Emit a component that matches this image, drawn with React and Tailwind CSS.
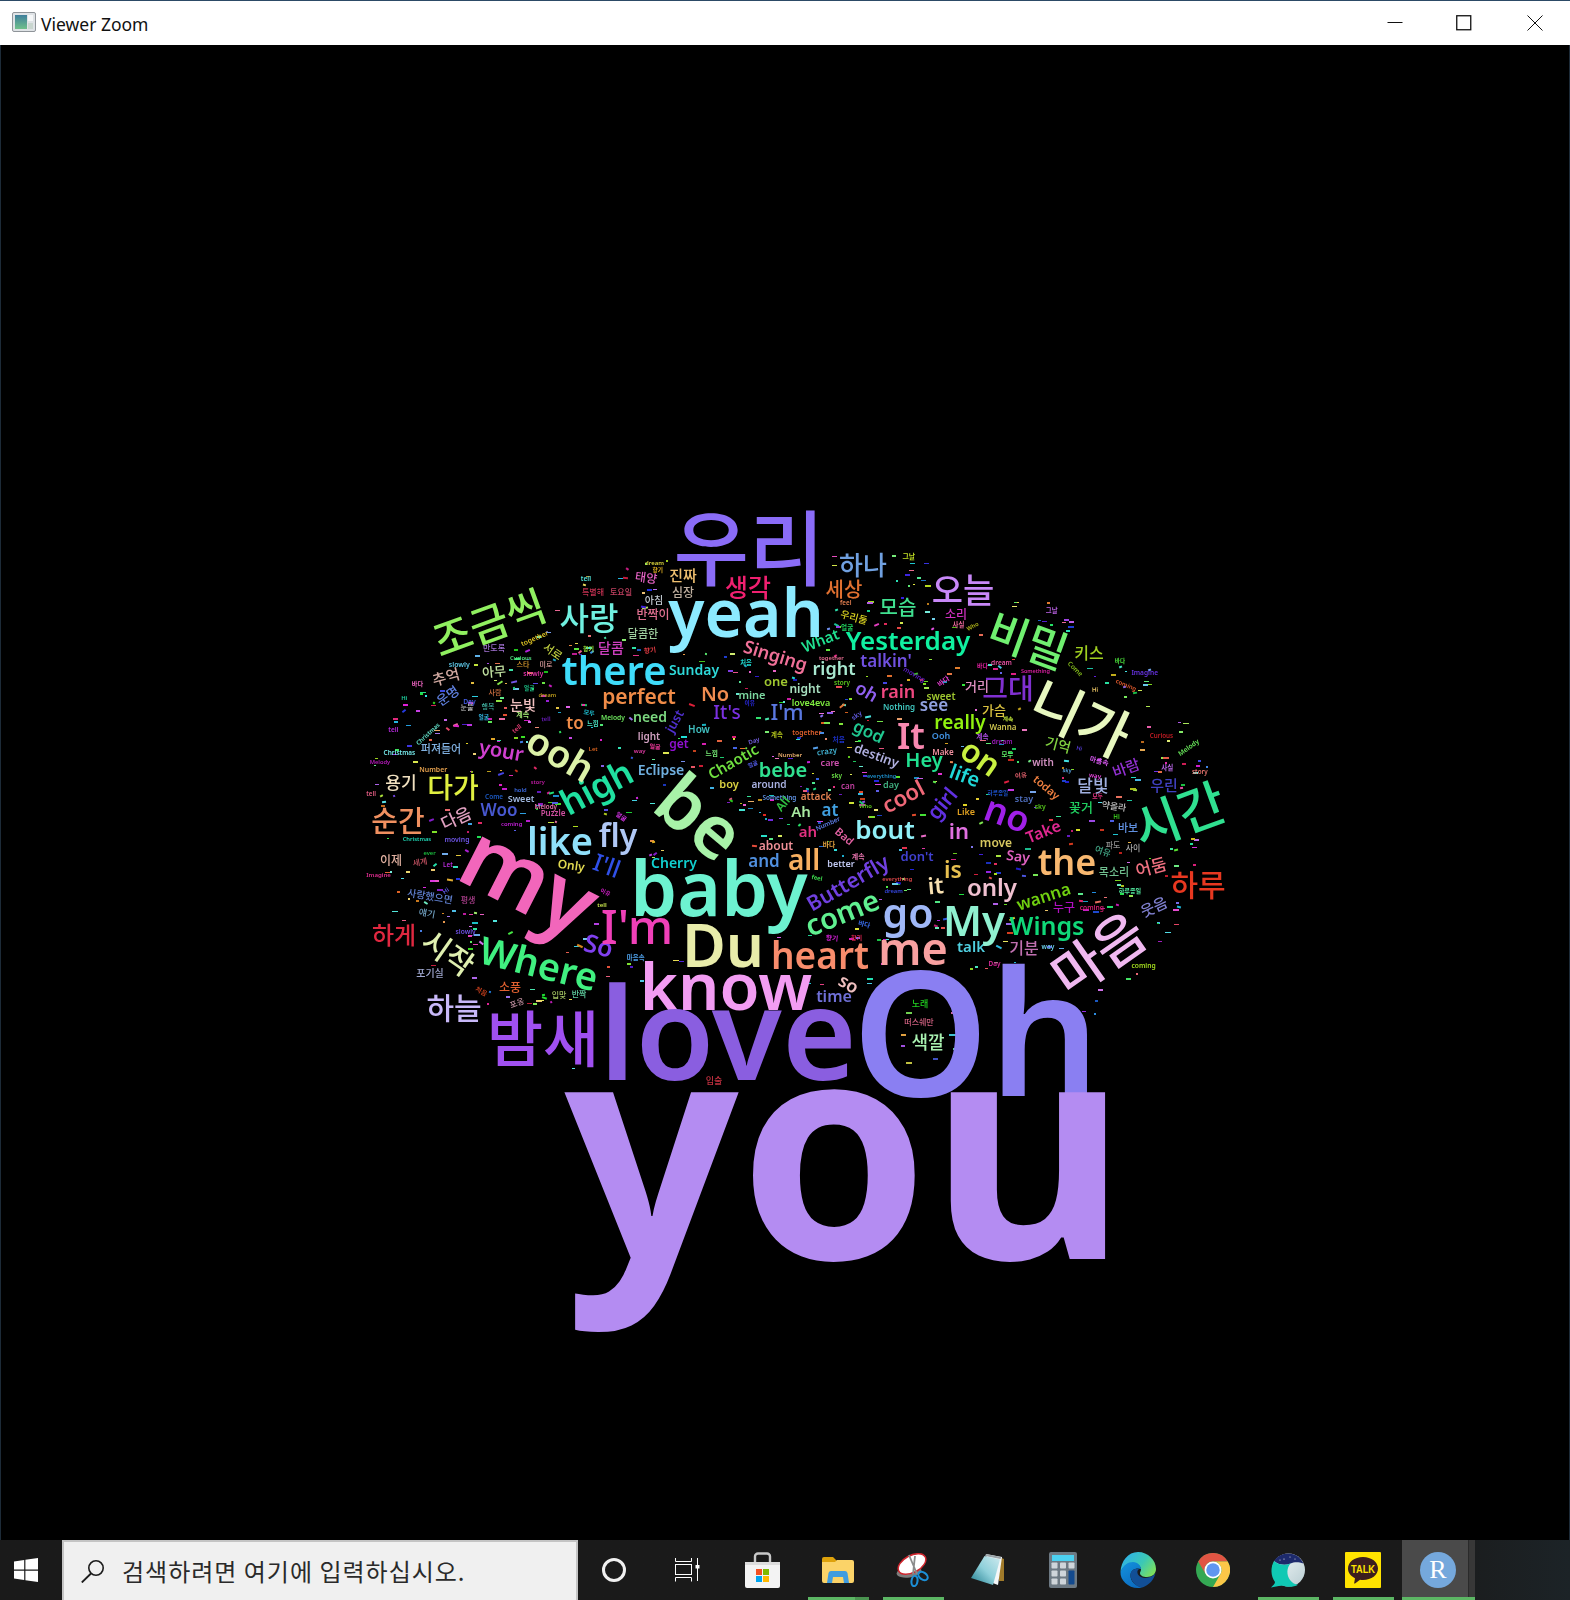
import React from "react";

// Word cloud data: [text, x, y, size, colour, rotation, weight]
// B = y is the text baseline, C = y is the visual middle of the lower-case letters / hangul
const B = [
  ["you", 845, 1259, 305, "#b48cf2", 0, 700],
  ["Oh", 975, 1097, 174, "#8a7ff2"],
  ["love", 727, 1080, 128, "#8a5ee0"],
  ["know", 725, 1010, 65, "#f29cf2"],
  ["baby", 718, 916, 75, "#6df2d0"],
  ["Du", 722, 967, 60, "#e8ecaa"],
  ["yeah", 745, 637, 66, "#8ceaff"],
  ["there", 613, 686, 40, "#3fdcfa"],
  ["Sunday", 693, 676, 14, "#2ed8d8"],
  ["perfect", 638, 705, 21, "#f08c48"],
  ["No", 714, 701, 20, "#f08c50"],
  ["It's", 726, 720, 19, "#7a30e0", 0, 500],
  ["I'm", 786, 720, 22, "#5a78e0", 0, 500],
  ["one", 775, 686, 13, "#a0c830"],
  ["mine", 751, 699, 11, "#7cd8a0"],
  ["need", 649, 723, 14, "#7cd880"],
  ["to", 574, 730, 17, "#f08c48"],
  ["like", 559, 855, 38, "#90e0fa"],
  ["fly", 617, 848, 32, "#b0c8f5"],
  ["I'm", 636, 945, 48, "#f040b8", 0, 500],
  ["heart", 819, 969, 37, "#f88c6c"],
  ["me", 912, 965, 45, "#f8a0a0"],
  ["go", 907, 928, 41, "#a0b8f8"],
  ["My", 973, 936, 42, "#90f0d0"],
  ["Wings", 1046, 935, 25, "#10d878"],
  ["only", 991, 896, 24, "#f0c0d0"],
  ["the", 1066, 876, 36, "#f8b870"],
  ["all", 803, 870, 28, "#f8b060"],
  ["bout", 884, 839, 26, "#90f0f8"],
  ["It", 910, 750, 36, "#f888b0"],
  ["really", 959, 730, 19, "#90f010"],
  ["Yesterday", 907, 650, 26, "#10f0a0"],
];

const C = [
  ["my", 525, 888, 92, "#f266bb", 27],
  ["be", 695, 822, 73, "#a8f2a8", 40],
  ["ooh", 558, 757, 38, "#dcf2a8", 30],
  ["your", 500, 753, 20, "#d040d0", 10],
  ["high", 597, 790, 35, "#20e0a0", -28],
  ["Eclipse", 660, 772, 14, "#70b0e0"],
  ["Chaotic", 733, 763, 15, "#70e040", -30],
  ["bebe", 782, 772, 20, "#30e090"],
  ["boy", 728, 785, 11, "#d8d040"],
  ["around", 768, 785, 10, "#a8b0e0"],
  ["Woo", 498, 812, 17, "#4858d0"],
  ["Sweet", 520, 800, 9, "#a0b8e0"],
  ["Puzzle", 552, 814, 8, "#d050a0"],
  ["Singing", 774, 657, 18, "#f07098", 17],
  ["just", 675, 722, 13, "#5030d0", -60],
  ["light", 648, 737, 10, "#d0a0c0"],
  ["How", 698, 730, 10, "#40c0c0"],
  ["get", 678, 745, 12, "#9010d0"],
  ["All", 783, 805, 12, "#30c040", -50],
  ["Ah", 800, 813, 15, "#a8e8a0"],
  ["I'll", 605, 868, 24, "#3050e8", 20, 500],
  ["Only", 570, 867, 12, "#e0d850", 8],
  ["Cherry", 673, 865, 14, "#10d0d0"],
  ["and", 763, 863, 17, "#5090e0"],
  ["about", 775, 847, 12, "#f09098"],
  ["Where", 537, 967, 38, "#40f080", 14],
  ["So", 597, 948, 25, "#8040f0", 15],
  ["come", 842, 915, 29, "#60f090", -22],
  ["Butterfly", 848, 885, 21, "#7040e0", -30],
  ["it", 935, 888, 23, "#f8e0b0", -5],
  ["is", 952, 872, 23, "#e8c050"],
  ["wanna", 1043, 898, 17, "#70d010", -18],
  ["Say", 1017, 858, 14, "#e060c0", 8],
  ["better", 840, 865, 9, "#c0c8f0"],
  ["don't", 916, 858, 13, "#4040d0"],
  ["Take", 1043, 833, 16, "#e02890", -22],
  ["move", 995, 844, 12, "#d8c860"],
  ["in", 958, 833, 22, "#e070e0"],
  ["ah", 807, 833, 15, "#e03080"],
  ["no", 1005, 818, 36, "#a020e8", 20],
  ["girl", 943, 805, 21, "#6030e0", -50],
  ["cool", 903, 798, 22, "#f06878", -28],
  ["at", 829, 812, 17, "#40a0e0"],
  ["attack", 815, 797, 10, "#e08050"],
  ["life", 963, 778, 20, "#20d8d8", 20],
  ["Hey", 923, 762, 20, "#20e090"],
  ["on", 978, 760, 32, "#c8f040", 35],
  ["destiny", 875, 757, 13, "#b0b0e0", 20],
  ["god", 867, 733, 17, "#20c890", 25],
  ["see", 933, 707, 17, "#90a0e0"],
  ["rain", 897, 693, 18, "#f04880"],
  ["sweet", 940, 697, 10, "#a0c830"],
  ["Nothing", 898, 708, 8, "#40c8c0"],
  ["oh", 865, 693, 18, "#9060f0", 30],
  ["talkin'", 885, 663, 17, "#7050e0"],
  ["right", 833, 670, 18, "#a8e8d0"],
  ["night", 804, 690, 12, "#a8e0c0"],
  ["love4eva", 810, 704, 9, "#80f040"],
  ["What", 820, 642, 15, "#20e090", -22],
  ["time", 833, 998, 16, "#7070d8"],
  ["so", 847, 985, 18, "#f0c0c0", 30],
  ["talk", 970, 948, 15, "#50d0e0"],
  ["Bad", 843, 837, 11, "#e060a0", 40],
  ["Like", 965, 813, 9, "#e0a020"],
  ["today", 1045, 788, 11, "#f08040", 40],
  ["stay", 1023, 800, 9, "#5070c0"],
  ["with", 1042, 763, 10, "#d090c0"],
  ["Ooh", 940, 737, 9, "#4090e0"],
  ["Make", 942, 753, 8, "#f090a0"],
  ["Wanna", 1002, 728, 8, "#d0c850"],
  ["day", 890, 786, 9, "#40b080"],
  ["care", 829, 764, 9, "#d050b0"],
  ["crazy", 826, 752, 8, "#40b0d0", -8],
  ["can", 847, 787, 8, "#c040a0"],
  ["우리", 748, 547, 82, "#8a6cf7"],
  ["조금씩", 488, 623, 42, "#90f060", -20],
  ["사랑", 588, 618, 32, "#70f0e0"],
  ["생각", 747, 587, 25, "#f02070"],
  ["진짜", 682, 575, 15, "#f0c070"],
  ["태양", 645, 578, 12, "#e060c0", 8],
  ["심장", 682, 593, 12, "#c0b0a0"],
  ["아침", 653, 600, 10, "#c0c8d0"],
  ["반짝이", 652, 615, 12, "#e07090"],
  ["달콤한", 642, 633, 11, "#a0d0a0"],
  ["달콤", 610, 648, 14, "#d040c0"],
  ["서로", 552, 651, 11, "#c0d040", 35],
  ["추억", 445, 677, 15, "#d0a8a0", -15],
  ["아무", 493, 672, 13, "#c0e0a0", -5],
  ["운명", 447, 696, 13, "#6080e0", -35],
  ["눈빛", 522, 705, 14, "#f0c0c0"],
  ["퍼져들어", 440, 748, 11, "#80b0e0"],
  ["용기", 400, 782, 17, "#f0e0c0"],
  ["다가", 452, 787, 28, "#e0f040"],
  ["순간", 397, 820, 29, "#f09060"],
  ["다음", 455, 818, 17, "#e0a0c0", -25],
  ["이제", 390, 861, 12, "#e0b0a0"],
  ["시작", 447, 953, 30, "#e0f0b0", 35],
  ["하게", 393, 935, 24, "#e02840"],
  ["하늘", 453, 1008, 30, "#c8b8f8"],
  ["밤새", 542, 1038, 61, "#a050f0"],
  ["포기실", 429, 973, 10, "#a0a8d0"],
  ["사랑했으면", 429, 896, 10, "#6080d0", 10],
  ["소풍", 509, 988, 12, "#e06030"],
  ["하나", 862, 565, 26, "#70a0e0"],
  ["세상", 843, 590, 20, "#e07030"],
  ["오늘", 962, 590, 34, "#c888f8"],
  ["모습", 897, 608, 20, "#40e090"],
  ["비밀", 1027, 640, 44, "#70f070", 20],
  ["소리", 955, 615, 12, "#d030c0"],
  ["우리둘", 853, 617, 10, "#d8d020", 15],
  ["키스", 1088, 653, 16, "#a0d020"],
  ["그대", 1007, 688, 28, "#8030d0"],
  ["거리", 976, 686, 13, "#e090c0"],
  ["니가", 1080, 717, 56, "#e8f8c0", 25],
  ["가슴", 993, 710, 13, "#d8c040"],
  ["기억", 1057, 745, 14, "#80d040", 15],
  ["바람", 1125, 768, 15, "#9030d0", -20],
  ["달빛", 1092, 785, 17, "#a0b0e0"],
  ["우린", 1163, 785, 15, "#4040c0"],
  ["꽃거", 1080, 807, 13, "#20d060"],
  ["시간", 1178, 815, 51, "#30e090", -20],
  ["바보", 1127, 827, 11, "#6090e0"],
  ["목소리", 1113, 871, 11, "#70c090"],
  ["어둠", 1150, 867, 17, "#f07080", -15],
  ["하루", 1197, 885, 30, "#e83820"],
  ["누구", 1063, 908, 12, "#b010c0"],
  ["웃음", 1153, 907, 15, "#8080d0", -25],
  ["마음", 1097, 953, 54, "#f0b8f0", -35],
  ["기분", 1023, 948, 16, "#c070b0"],
  ["색깔", 927, 1042, 18, "#a8f0b0"],
  ["노래", 919, 1003, 9, "#20d020"],
  ["떠스쉐만", 918, 1022, 8, "#d06080"],
  ["입술", 713, 1080, 9, "#c03040"],
  ["특별해", 592, 592, 8, "#c03050"],
  ["토요일", 620, 592, 8, "#c04060"],
  ["만도록", 493, 648, 8, "#a070d0"],
  ["스타", 522, 664, 7, "#e0a030"],
  ["미로", 545, 664, 7, "#e0a0a0"],
  ["사람", 494, 692, 7, "#d07040"],
  ["눈물", 466, 707, 7, "#c0c0c0"],
  ["행복", 487, 706, 7, "#40b0a0"],
  ["세계", 419, 862, 8, "#c05060", -10],
  ["얘기", 426, 913, 9, "#70a0c0", 10],
  ["평생", 467, 900, 8, "#b04090"],
  ["입맞", 558, 995, 8, "#a0c060"],
  ["반짝", 578, 994, 8, "#60d0a0"],
  ["포옹", 516, 1003, 8, "#c090a0", -20],
  ["파도", 1112, 845, 8, "#909090"],
  ["사이", 1132, 848, 8, "#b0b0b0"],
  ["여유", 1102, 851, 9, "#40a080", 20],
  ["약올라", 1113, 806, 9, "#c0c0c0", 8],
];

const words = [
  ...B.map(([t, x, y, s, c, r, f]) => ({ t, x, y: y + 0 - 0.268 * s, s, c, r: r || 0, f })),
  ...C.map(([t, x, y, s, c, r, f]) => ({ t, x, y, s, c, r: r || 0, f })),
].sort((a, b) => a.s - b.s);

const isKo = (t) => /[가-힣]/.test(t);
const halfWidth = (t, s) => t.length * s * (isKo(t) ? 0.49 : 0.29);

// Is the point inside the (possibly rotated) rectangle of a placed word?
const hitOne = (w, px, py) => {
  const a = (-w.r * Math.PI) / 180;
  const dx = px - w.x;
  const dy = py - w.y;
  const lx = dx * Math.cos(a) - dy * Math.sin(a);
  const ly = dx * Math.sin(a) + dy * Math.cos(a);
  return Math.abs(lx) < halfWidth(w.t, w.s) + 1.5 && Math.abs(ly) < w.s * 0.46 + 1.5;
};
const hit = (px, py) => words.some((w) => hitOne(w, px, py));

function rng(seed) {
  let a = seed;
  return () => {
    a |= 0;
    a = (a + 0x6d2b79f5) | 0;
    let t = Math.imul(a ^ (a >>> 15), 1 | a);
    t = (t + Math.imul(t ^ (t >>> 7), 61 | t)) ^ t;
    return ((t ^ (t >>> 14)) >>> 0) / 4294967296;
  };
}

const pool = ["Day", "feel", "Come", "tell", "Who", "Let", "Hi", "mix", "sky", "way", "ever", "thing", "hold", "story", "dream", "Imagine", "slowly", "Christmas", "Number", "everything", "together", "moving", "coming", "Curious", "Melody", "Something", "이유", "사실", "모두", "바다", "마음속", "하루종일", "얼굴", "계속", "향기", "느낌", "그날", "처음"];

const r = rng(7);
const inCloud = (x, y) => {
  const dx = (x - 785) / 425;
  const dy = (y - 800) / (y < 800 ? 255 : 310);
  if (dx * dx + dy * dy > 1) return false;
  if (y > 1000 && x < 470) return false;
  if (y > 985 && x > 1100) return false;
  if (x > 950 && y < 600) return false;
  if (x > 1080 && y < 660) return false;
  if (x > 1150 && y < 720) return false;
  if (x < 430 && y < 680) return false;
  if (x < 385 && y < 740) return false;
  return y < 1092;
};
const dashes = [];
const tiny = [];
for (let i = 0; i < 6000 && (dashes.length < 640 || tiny.length < 110); i++) {
  const x = 370 + r() * 840;
  const y = 540 + r() * 550;
  const hue = Math.floor(r() * 360);
  const light = 42 + Math.floor(r() * 28);
  const kind = r();
  if (!inCloud(x, y) || hit(x, y)) continue;
  const col = `hsl(${hue} 75% ${light}%)`;
  if (kind < 0.8) {
    if (dashes.length < 640) dashes.push({ x, y, w: 2 + r() * 4, h: r() < 0.7 ? 1.5 : 2, col, rot: r() < 0.2 ? -40 + r() * 80 : 0 });
  } else if (tiny.length < 110) {
    const t = pool[Math.floor(r() * pool.length)];
    const s = 5.5 + r() * 1.5;
    const hw = halfWidth(t, s);
    const rot = r() < 0.25 ? -45 + r() * 90 : 0;
    const clear =
      !hit(x - hw, y) && !hit(x + hw, y) && !tiny.some((o) => Math.abs(o.x - x) < o.hw + hw + 2 && Math.abs(o.y - y) < o.s / 2 + s / 2 + 2);
    if (clear) tiny.push({ t, x, y, s, col, rot, hw });
  }
}
// filler inside the counter of the O
[[905, 1012, 6, "#70d050"], [950, 1012, 5, "#d060a0"], [900, 1034, 5, "#e0a040"], [948, 1034, 7, "#40c0d0"], [905, 1062, 6, "#c0c040"], [932, 1058, 5, "#4050c0"], [935, 990, 6, "#e06060"], [900, 1045, 4, "#a050e0"], [952, 1048, 5, "#60d0a0"]].forEach(([x, y, w, col]) => dashes.push({ x, y, w, h: 1.5, col, rot: 0 }));

function Cloud() {
  return (
    <div className="absolute inset-0 blur-[0.7px]" style={{ top: -45 }}>
      {dashes.map((d, i) => (
        <span key={i} className="absolute block" style={{ left: d.x, top: d.y, width: d.w, height: d.h, background: d.col, transform: `rotate(${d.rot}deg)` }} />
      ))}
      {tiny.map((w, i) => (
        <span key={i} className="absolute whitespace-nowrap font-semibold leading-none font-['Noto_Sans','Noto_Sans_CJK_KR',sans-serif]" style={{ left: w.x, top: w.y, fontSize: w.s, color: w.col, transform: `translate(-50%,-50%) rotate(${w.rot}deg)` }}>
          {w.t}
        </span>
      ))}
      {words.map((w, i) => {
        const ko = isKo(w.t);
        return (
          <span key={i} className="absolute whitespace-nowrap leading-none font-['Noto_Sans','Noto_Sans_CJK_KR',sans-serif]" style={{ left: w.x, top: w.y, fontSize: w.s, color: w.c, fontWeight: w.f || (ko ? 500 : 600), transform: `translate(-50%,-50%) rotate(${w.r}deg) translateY(${ko ? "0em" : "-0.12em"})` }}>
            {w.t}
          </span>
        );
      })}
    </div>
  );
}

function TitleIcon() {
  return (
    <svg width="24" height="20" viewBox="0 0 24 20" className="block">
      <defs>
        <linearGradient id="ti" x1="0" y1="0" x2="0" y2="1">
          <stop offset="0" stopColor="#3f7f9c" />
          <stop offset="1" stopColor="#6fc08a" />
        </linearGradient>
      </defs>
      <rect x="0.5" y="0.5" width="23" height="19" rx="1.5" fill="#dfe3e6" stroke="#8f9499" />
      <rect x="3" y="3" width="12" height="14" fill="url(#ti)" />
      <rect x="16" y="3" width="5" height="6" fill="#f5f7f8" />
      <rect x="16" y="11" width="5" height="6" fill="#c9d6cf" />
    </svg>
  );
}

function TitleBar() {
  return (
    <div className="flex h-[45px] shrink-0 items-center border-t border-t-[#2c4a66] bg-white">
      <div className="ml-3 mr-[5px] mt-[-2px]">
        <TitleIcon />
      </div>
      <span className="mt-[3px] text-[17.5px] leading-none text-[#111] font-['Noto_Sans',sans-serif]">Viewer Zoom</span>
      <div className="ml-auto flex items-center pr-[27px]">
        <svg width="16" height="16" viewBox="0 0 16 16" className="mr-[53px]"><path d="M0.5 7.5H15.5" stroke="#111" strokeWidth="1" /></svg>
        <svg width="16" height="16" viewBox="0 0 16 16" className="mr-[55px]"><rect x="0.75" y="0.75" width="14" height="14" fill="none" stroke="#111" strokeWidth="1.3" /></svg>
        <svg width="16" height="16" viewBox="0 0 16 16"><path d="M0.5 0.5L15.5 15.5M15.5 0.5L0.5 15.5" stroke="#111" strokeWidth="1" /></svg>
      </div>
    </div>
  );
}

function WinLogo() {
  return (
    <svg width="24" height="24" viewBox="0 0 24 24" className="block">
      <path fill="#fff" d="M0 3.4L10.2 2V11.5H0ZM11.4 1.8L24 0V11.5H11.4ZM0 12.7H10.2V22L0 20.6ZM11.4 12.7H24V24L11.4 22.2Z" />
    </svg>
  );
}

function Store() {
  return (
    <svg width="35" height="36" viewBox="0 0 35 36" className="block">
      <path d="M10 11V4.5A3 3 0 0 1 13 1.5H22A3 3 0 0 1 25 4.5V11" fill="none" stroke="#c8c8c8" strokeWidth="2.4" />
      <path d="M0 10H35V34A2 2 0 0 1 33 36H2A2 2 0 0 1 0 34Z" fill="#f3f3f3" />
      <rect x="0" y="10" width="35" height="3" fill="#dcdcdc" />
      <rect x="11" y="17" width="6" height="6" fill="#f25022" />
      <rect x="18" y="17" width="6" height="6" fill="#7fba00" />
      <rect x="11" y="24" width="6" height="6" fill="#00a4ef" />
      <rect x="18" y="24" width="6" height="6" fill="#ffb900" />
    </svg>
  );
}

function Folder() {
  return (
    <svg width="32" height="26" viewBox="0 0 32 26" className="block">
      <path d="M0 2A2 2 0 0 1 2 0H11L15 4H28V10H0Z" fill="#dea20b" />
      <path d="M0 5H13L15 3H30A2 2 0 0 1 32 5V24A2 2 0 0 1 30 26H2A2 2 0 0 1 0 24Z" fill="#fbd368" />
      <path d="M5 26L6.5 16A3 3 0 0 1 9 14H23A3 3 0 0 1 25.5 16L27 26H22L21 20H11L10 26Z" fill="#3f9ce0" />
    </svg>
  );
}

function Snip() {
  return (
    <svg width="34" height="34" viewBox="0 0 34 34" className="block">
      <ellipse cx="13" cy="19" rx="12.5" ry="5.5" fill="#7d7d7d" transform="rotate(-8 13 19)" />
      <ellipse cx="16" cy="11" rx="15" ry="8.5" fill="#fff" stroke="#d0262e" strokeWidth="1.5" transform="rotate(-28 16 11)" />
      <path d="M13 2L21 21M19 3L17 21" stroke="#8b8b8b" strokeWidth="1.8" fill="none" />
      <ellipse cx="18.5" cy="28" rx="3" ry="5.2" fill="none" stroke="#1c8fd6" strokeWidth="2.1" transform="rotate(8 18.5 28)" />
      <ellipse cx="27" cy="23" rx="5.2" ry="3.4" fill="none" stroke="#1c8fd6" strokeWidth="2.1" transform="rotate(35 27 23)" />
    </svg>
  );
}

function Notepad() {
  return (
    <svg width="33" height="32" viewBox="0 0 33 32" className="block">
      <defs>
        <linearGradient id="np" x1="0" y1="1" x2="1" y2="0">
          <stop offset="0" stopColor="#1f7c8e" />
          <stop offset="0.5" stopColor="#8fd0da" />
          <stop offset="1" stopColor="#cfeaef" />
        </linearGradient>
      </defs>
      <path d="M28 3L33 5V27L28 27Z" fill="#a07a2a" />
      <path d="M15 0L31 3L27 31L19 28Z" fill="#f4f7f8" />
      <path d="M15 0L30 3L29.6 5L14 2Z" fill="#9aa3a8" />
      <path d="M13.5 2L29 5.5L22 31L0 24Z" fill="url(#np)" />
    </svg>
  );
}

function Calc() {
  const cols = [2.5, 11, 19.5];
  const rows = [10.5, 18.5, 26.5];
  return (
    <svg width="28" height="36" viewBox="0 0 28 36" className="block">
      <rect width="28" height="36" rx="2" fill="#6d7983" />
      <rect x="3" y="3" width="22" height="6" fill="#4cd0f0" />
      {rows.map((y) =>
        cols.map((x) =>
          x === 19.5 && y > 11 ? null : <rect key={`${x}-${y}`} x={x} y={y} width="6" height="6" rx="0.8" fill="#cfd5da" />
        )
      )}
      <rect x="19.5" y="18.5" width="6" height="14" rx="0.8" fill="#134a8e" />
    </svg>
  );
}

function Edge() {
  return (
    <svg width="36" height="36" viewBox="0 0 36 36" className="block">
      <defs>
        <linearGradient id="e1" x1="0.1" y1="0.2" x2="1" y2="0.7">
          <stop offset="0" stopColor="#2fb3e6" />
          <stop offset="0.55" stopColor="#3cc8b4" />
          <stop offset="1" stopColor="#7ce05e" />
        </linearGradient>
        <linearGradient id="e2" x1="0" y1="0" x2="0.6" y2="1">
          <stop offset="0" stopColor="#1493de" />
          <stop offset="1" stopColor="#0c6cc0" />
        </linearGradient>
      </defs>
      <path d="M18 0C28 0 36 8 36 17C36 22 32 25 27 25C23 25 20 23.5 20 21C20 20 21 19 21 17.5C21 14 17 11 13 11C7 11 3 15 0.5 20C1 9 8 0 18 0Z" fill="url(#e1)" />
      <path d="M0.5 20C3 13 8 10 13 10C18 10 21 14 21 17C17 15.5 11 17 10.5 23C10 29 16 35 23 35.3C21 35.8 19.5 36 18 36C8 36 0 28 0.5 20Z" fill="url(#e2)" />
      <path d="M10.5 23C10.5 19 14 16 19 17C17 18.5 17 20.5 18 22.5C20 25.5 24 26.5 28 25.5C31 25 34 23.5 35.5 21C34 28 29 33 23 35.3C16 35.5 10.5 29 10.5 23Z" fill="#124f96" />
    </svg>
  );
}

function Chrome() {
  return (
    <svg width="34" height="34" viewBox="0 0 48 48" className="block">
      <circle cx="24" cy="24" r="24" fill="#34a853" />
      <path d="M3.2 12A24 24 0 0 1 44.8 12H24A12 12 0 0 0 13.6 30Z" fill="#e05443" />
      <path d="M44.8 12A24 24 0 0 1 24 48L34.4 30A12 12 0 0 0 24 12Z" fill="#fbc748" />
      <circle cx="24" cy="24" r="12" fill="#fff" />
      <circle cx="24" cy="24" r="9.5" fill="#5f96f0" />
    </svg>
  );
}

function Whale() {
  return (
    <svg width="35" height="35" viewBox="0 0 35 35" className="block">
      <defs>
        <linearGradient id="wh" x1="0" y1="0" x2="1" y2="1">
          <stop offset="0" stopColor="#f6fafa" />
          <stop offset="1" stopColor="#b8cdd2" />
        </linearGradient>
      </defs>
      <circle cx="18.5" cy="17" r="16.5" fill="url(#wh)" />
      <path d="M4 8C7 3.500 12 .5 18.5 .5C25 .5 30.500 4 33.500 10.500C28 8.500 24 9 20.500 10.500C15 13 9 12 4 8Z" fill="#1d2a6c" />
      <path d="M4 8C9 12 15 13 20.500 10.500C16.500 15 16.500 22 20 27C22.500 30 25 31.500 28 31.800C24 34 19 34.500 14 33C10 32 5 34 1 34.500C3.500 32 5 31 5 29C0.500 23 0.500 14 4 8Z" fill="#10c9b4" />
      <circle cx="14" cy="6" r="0.6" fill="#fff" /><circle cx="20" cy="4" r="0.5" fill="#fff" /><circle cx="25" cy="6" r="0.5" fill="#fff" /><circle cx="10" cy="7" r="0.5" fill="#fff" />
    </svg>
  );
}

function Talk() {
  return (
    <div className="relative flex h-9 w-9 items-center justify-center rounded-[1px] bg-[#ffe300]">
      <svg width="32" height="30" viewBox="0 0 32 30" className="block">
        <path d="M16 2C24.5 2 31 7 31 13.5C31 20 24.5 25 16 25C15 25 14 25 13 24.8L8 28.5C7.5 28.8 7 28.5 7.2 28L8 23.2C3.500 21 1 17.500 1 13.5C1 7 7.500 2 16 2Z" fill="#3b1e1e" />
        <text x="16" y="17.5" textAnchor="middle" fontSize="10" fontWeight="700" fill="#ffe300" fontFamily="'Liberation Sans', sans-serif" textLength="24" lengthAdjust="spacingAndGlyphs">TALK</text>
      </svg>
    </div>
  );
}

function Cell({ w, bar, children }) {
  return (
    <div className={`relative flex h-full shrink-0 items-center justify-center ${w}`}>
      {children}
      {bar}
    </div>
  );
}

const Bar = ({ split }) => (
  <div className="absolute bottom-0 left-2 flex h-[3px] w-[61px]">
    <div className="h-full flex-1 bg-[#5cb664]" />
    {split ? <div className="h-full w-[14px] bg-[#4a9450]" /> : null}
  </div>
);

function Taskbar() {
  return (
    <div className="flex h-[60px] shrink-0 bg-linear-to-r from-[#1a1a1a] via-[#1a1a1a] via-90% to-[#1c2327]">
      <div className="flex h-full w-[62px] shrink-0 items-center justify-start pl-[14px]">
        <WinLogo />
      </div>
      <div className="flex h-full w-[516px] shrink-0 items-center border-x-2 border-t-2 border-[#c4c4c4] bg-[#f0f0f0] pl-[17px]">
        <svg width="24" height="24" viewBox="0 0 24 24" className="block shrink-0">
          <circle cx="15" cy="9" r="7.2" fill="none" stroke="#1c1c1c" strokeWidth="1.6" />
          <path d="M10 14.500L0.800 23.500" stroke="#1c1c1c" strokeWidth="1.8" />
        </svg>
        <span className="ml-[17px] whitespace-nowrap text-[24px] leading-none tracking-[1px] text-[#2a2a2a] font-['Noto_Sans_CJK_KR',sans-serif]">검색하려면 여기에 입력하십시오.</span>
      </div>
      <Cell w="w-[71px]">
        <div className="h-6 w-6 rounded-full border-[3px] border-[#f0f0f0]" />
      </Cell>
      <Cell w="w-[76px]">
        <svg width="25" height="24" viewBox="0 0 25 24" className="block">
          <path d="M0.500 0V3.500H16.500V0M0.500 23.500V19.500H16.500V23.500" fill="none" stroke="#fff" strokeWidth="1" />
          <rect x="0.500" y="6.500" width="16" height="10" fill="none" stroke="#fff" strokeWidth="1" />
          <path d="M22.500 0V23" stroke="#fff" strokeWidth="1" />
          <rect x="20.500" y="7" width="4" height="3.500" fill="#fff" />
        </svg>
      </Cell>
      <Cell w="w-[75px]"><Store /></Cell>
      <Cell w="w-[75px]" bar={<Bar split />}><Folder /></Cell>
      <Cell w="w-[75px]" bar={<Bar />}><Snip /></Cell>
      <Cell w="w-[75px]"><Notepad /></Cell>
      <Cell w="w-[75px]"><Calc /></Cell>
      <Cell w="w-[75px]"><Edge /></Cell>
      <Cell w="w-[75px]"><Chrome /></Cell>
      <Cell w="w-[75px]" bar={<Bar />}><Whale /></Cell>
      <Cell w="w-[75px]" bar={<Bar />}><Talk /></Cell>
      <div className="relative ml-[2px] flex h-full w-[73px] shrink-0">
        <div className="flex h-full w-[66px] items-center justify-start bg-[#4a4a4a] pl-[18px]">
          <div className="flex h-9 w-9 items-center justify-center rounded-full bg-[#75a8dc] text-[26px] leading-none text-white font-['Liberation_Serif',serif]">R</div>
        </div>
        <div className="h-full w-[7px] border-l border-l-[#2a2a2a] bg-[#383838]" />
        <div className="absolute bottom-0 left-0 h-[3px] w-full bg-[#5cb664]" />
      </div>
    </div>
  );
}

export default function App() {
  return (
    <div className="flex h-[1600px] w-[1570px] flex-col overflow-hidden bg-black">
      <TitleBar />
      <div className="relative flex-1 overflow-hidden border-x border-x-[#1d2b38] bg-black">
        <Cloud />
      </div>
      <Taskbar />
    </div>
  );
}
